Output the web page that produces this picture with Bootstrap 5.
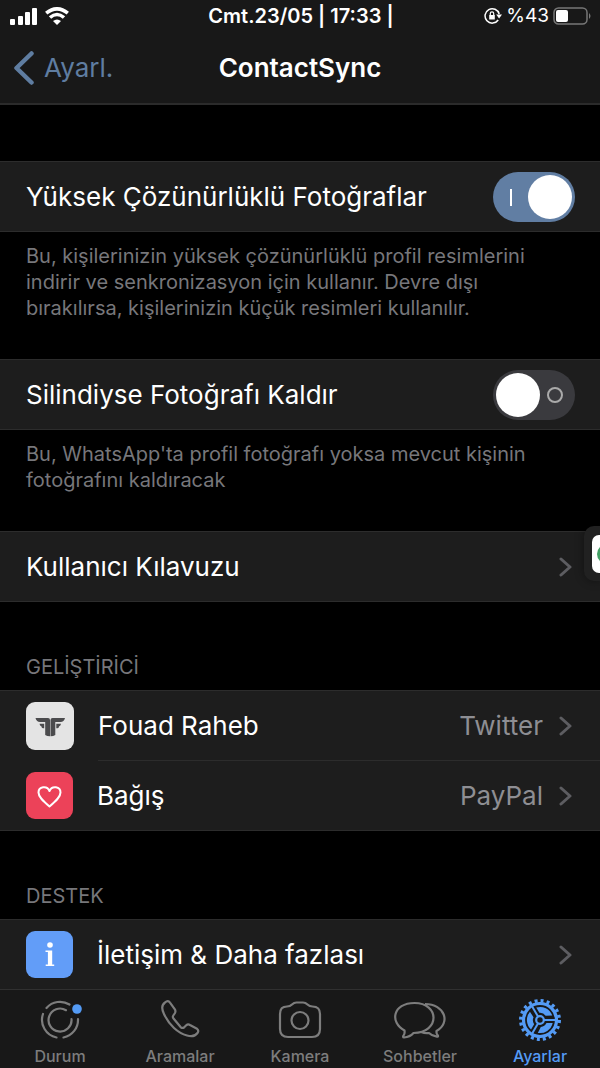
<!DOCTYPE html>
<html lang="tr" data-bs-theme="dark">
<head>
<meta charset="utf-8">
<meta name="viewport" content="width=device-width, initial-scale=1">
<title>ContactSync</title>
<link rel="stylesheet" href="https://cdn.jsdelivr.net/npm/bootstrap@5.3.0/dist/css/bootstrap.min.css">
<style>
  body { background: #000; color: #fff; font-family: Inter, "Liberation Sans", sans-serif; line-height: 1.2; }
  a { text-decoration: none; }
  .top-area { background: #181818; border-bottom: 2px solid #2b2b2b; }
  .status { height: 32px; padding: 0 8px 0 10px; font-size: 20px; }
  .status-side { flex: 1 1 0; }
  .battery-text { font-size: 19px; }
  .title-bar { height: 71px; padding: 0 12px; font-size: 26px; }
  .back-link { color: #5f7da1; flex: 1 1 0; gap: 10px; }
  .page-title { font-size: 26px; font-weight: 600; margin: 0; }
  .settings-scroll { padding-top: 56px; }
  .group { background: #1d1d1d; border: solid #2c2c2c; border-width: 1px 0; margin: 0; }
  .group-open { border-bottom: 0; }
  .line { min-height: 69px; padding: 0 26px; font-size: 26px; color: #fff; }
  .toggle-line { padding-right: 25px; }
  .divider { height: 1px; margin-left: 98px; background: #2c2c2c; }
  .line-detail { color: #8e8e93; }
  .note { color: #77777b; font-size: 20px; line-height: 26px; padding: 11px 26px 38px; margin: 0; }
  .section-title { color: #77777b; font-size: 20px; line-height: 24px; padding: 53px 26px 11px; margin: 0; font-weight: 400; }
  .tile { width: 48px; height: 48px; margin-right: 24px; }
  .tile-small { width: 47px; height: 47px; }
  .toggle.form-check-input { width: 82px; height: 50px; margin: 0; border: 0; border-radius: 25px; background-color: #3a3a3e; background-size: 82px 50px; background-position: center;
    background-image: url("data:image/svg+xml,%3Csvg xmlns='http://www.w3.org/2000/svg' viewBox='0 0 82 50'%3E%3Ccircle cx='62' cy='25' r='7' fill='none' stroke='%23aaa' stroke-width='2'/%3E%3Ccircle cx='25' cy='25' r='22' fill='%23fff'/%3E%3C/svg%3E"); }
  .toggle.form-check-input:checked { background-color: #617ea3;
    background-image: url("data:image/svg+xml,%3Csvg xmlns='http://www.w3.org/2000/svg' viewBox='0 0 82 50'%3E%3Cpath d='M18 17v17' stroke='%23fff' stroke-width='2'/%3E%3Ccircle cx='57' cy='25' r='22' fill='%23fff'/%3E%3C/svg%3E"); }
  .tab-area { background: #181818; border-top: 1px solid #303030; height: 79px; }
  .tab-item { color: #7d7d7d; font-size: 16px; font-weight: 500; line-height: 20px; padding-top: 8px; gap: 4px; }
  .tab-item.active { color: #549bf5; }
  .side-handle { position: fixed; right: 0; top: 526px; width: 16px; height: 55px; background: #212121; border: 0; border-radius: 10px 0 0 10px; padding: 0; box-shadow: 0 0 10px #0006; }
</style>
</head>
<body class="d-flex flex-column min-vh-100">
<header class="top-area sticky-top">
  <div class="status d-flex align-items-center">
    <div class="status-side d-flex align-items-center gap-2">
      <svg width="27" height="18" fill="#fff"><rect y="12" width="5" height="6" rx="1"/><rect x="8" y="9" width="5" height="9" rx="1"/><rect x="15" y="5" width="5" height="13" rx="1"/><rect x="22" y="1" width="5" height="17" rx="1"/></svg>
      <svg width="24" height="18" viewBox="0 0 24 18" fill="none" stroke="#fff" stroke-width="3.600"><path d="M1.200 6.200Q12-2.500 22.800 6.200M5 10.500Q12 4.500 19 10.500"/><path d="M12 18L8 14Q12 10.800 16 14Z" fill="#fff" stroke="none"/></svg>
    </div>
    <div class="fw-semibold">Cmt.23/05 | 17:33 |</div>
    <div class="status-side d-flex align-items-center justify-content-end">
      <svg class="me-1" width="18" height="18" viewBox="0 0 18 18" fill="none" stroke="#fff" stroke-width="1.500"><path d="M14.200 13A7.200 7.200 0 1 1 15.200 7"/><path d="M12.200 7.500h5.800l-2.900 4z" fill="#fff" stroke="none"/><rect x="5.200" y="8" width="5.600" height="4.500" fill="#fff" stroke="none"/><path d="M6.300 8V6.500a1.700 1.700 0 0 1 3.400 0V8" stroke-width="1.200"/></svg>
      <span class="battery-text">%43</span>
      <svg class="ms-1" width="39" height="18" viewBox="0 0 39 18"><rect x="1" y="1" width="33" height="16" rx="4.500" fill="none" stroke="#777" stroke-width="1.500"/><rect x="3" y="3" width="12" height="12" rx="2" fill="#fff"/><path d="M36 6q3 3 0 6z" fill="#777"/></svg>
    </div>
  </div>
  <div class="title-bar d-flex align-items-center">
    <a class="back-link d-flex align-items-center" href="#"><svg width="22" height="34" viewBox="0 0 22 34" fill="none" stroke="currentColor" stroke-width="4.500" stroke-linecap="round" stroke-linejoin="round"><path d="M19.500 2.500L4.500 17l15 14.500"/></svg>Ayarl.</a>
    <h1 class="page-title">ContactSync</h1>
    <span class="status-side"></span>
  </div>
</header>

<main class="settings-scroll flex-grow-1">
  <section class="group"><div class="line toggle-line d-flex align-items-center justify-content-between">
    <label for="hires">Yüksek Çözünürlüklü Fotoğraflar</label><input class="form-check-input toggle" type="checkbox" role="switch" id="hires" checked></div></section>
  <p class="note">Bu, kişilerinizin yüksek çözünürlüklü profil resimlerini indirir ve senkronizasyon için kullanır. Devre dışı bırakılırsa, kişilerinizin küçük resimleri kullanılır.</p>
  <section class="group"><div class="line toggle-line d-flex align-items-center justify-content-between">
    <label for="remove">Silindiyse Fotoğrafı Kaldır</label><input class="form-check-input toggle" type="checkbox" role="switch" id="remove"></div></section>
  <p class="note">Bu, WhatsApp'ta profil fotoğrafı yoksa mevcut kişinin fotoğrafını kaldıracak</p>
  <section class="group"><a href="#" class="line d-flex align-items-center justify-content-between">Kullanıcı Kılavuzu
    <svg width="15" height="22" fill="none" stroke="#5d5d61" stroke-width="3" stroke-linecap="round" stroke-linejoin="round"><path d="M2 3l9 8-9 8"/></svg></a></section>

  <h2 class="section-title">GELİŞTİRİCİ</h2>
  <section class="group">
    <a href="#" class="line d-flex align-items-center">
      <svg class="tile" viewBox="0 0 48 48"><rect width="48" height="48" rx="9" fill="#e4e4e4"/><g fill="#4b4b4d"><path d="M9.500 16H22q2 0 2 2V34.300q-3 0-4.800-1.300V20H14q-3.500 0-4.500-4z"/><path d="M39 16H26.500q-2 0-2 2V34.300q3 0 4.800-1.300V20H34.500q3.500 0 4.500-4z"/><path d="M13.500 21.700H18.200V26.200H17q-1.500 0-1.500-1.700-1.700-.5-2-2.800zM35 21.700H30.300V26.200H31.500q1.500 0 1.500-1.700 1.700-.5 2-2.800z"/></g></svg>
      <span class="flex-grow-1">Fouad Raheb</span><span class="line-detail">Twitter</span>
      <svg class="ms-3" width="15" height="22" fill="none" stroke="#5d5d61" stroke-width="3" stroke-linecap="round" stroke-linejoin="round"><path d="M2 3l9 8-9 8"/></svg>
    </a>
    <div class="divider"></div>
    <a href="#" class="line d-flex align-items-center">
      <svg class="tile tile-small" viewBox="0 0 47 47"><rect width="47" height="47" rx="9" fill="#ec4259"/><path d="M23.500 34.500C17 29 12.500 25 12.500 20.500c0-6 8.500-7.500 11-1.500 2.500-6 11-4.500 11 1.500 0 4.500-4.500 8.500-11 14z" fill="none" stroke="#fff" stroke-width="2" stroke-linejoin="round"/></svg>
      <span class="flex-grow-1">Bağış</span><span class="line-detail">PayPal</span>
      <svg class="ms-3" width="15" height="22" fill="none" stroke="#5d5d61" stroke-width="3" stroke-linecap="round" stroke-linejoin="round"><path d="M2 3l9 8-9 8"/></svg>
    </a>
  </section>

  <h2 class="section-title">DESTEK</h2>
  <section class="group group-open">
    <a href="#" class="line d-flex align-items-center">
      <svg class="tile tile-small" viewBox="0 0 47 47"><rect width="47" height="47" rx="9" fill="#629df8"/><circle cx="24" cy="14" r="2.800" fill="#fff"/><path d="M19.500 19.500h6.700v14h2v1.500h-8.500v-1.500h2.200v-12.500h-2.400z" fill="#fff"/></svg>
      <span class="flex-grow-1">İletişim &amp; Daha fazlası</span>
      <svg width="15" height="22" fill="none" stroke="#5d5d61" stroke-width="3" stroke-linecap="round" stroke-linejoin="round"><path d="M2 3l9 8-9 8"/></svg>
    </a>
  </section>
</main>

<button class="side-handle" type="button" aria-label="Panel"><svg class="d-block ms-auto" width="8" height="38"><rect width="20" height="38" rx="7" fill="#fff"/><circle cx="15" cy="19" r="10" fill="#43a065"/></svg></button>

<nav class="tab-area d-flex sticky-bottom">
  <a href="#" class="tab-item col d-flex flex-column align-items-center"><svg width="44" height="44" viewBox="-22 -22 44 44" fill="none" stroke="currentColor" stroke-width="2.200" stroke-linecap="round"><path d="M6-9.800A11.500 11.500 0 1 0 11.500-1"/><path d="M-13.500-12A18 18 0 0 1 9.500-15.500M18-1A18 18 0 0 1 3.500 17.500M-3.500 17.500A18 18 0 0 1-17-6"/><circle cx="17" cy="-11" r="4.800" fill="#549bf5" stroke="none"/></svg>Durum</a>
  <a href="#" class="tab-item col d-flex flex-column align-items-center"><svg width="44" height="44" viewBox="0 -2 44 44" fill="none" stroke="currentColor" stroke-width="2.200" stroke-linejoin="round"><path d="M7 2.500C3.500 5 3.500 9 6 14c5 11 14 19 23 21.500 4 1.200 8 1 10.500-2.500 1.200-1.500.8-3-.5-4.200L32 25q-2-1.200-3.800.3L26 27.500q-1.500 1-3.200-.2L15.500 18.500q-1.200-1.500-.2-3L17 13q1-2-.3-3.800L12 2.700Q10-.2 7 2.500z"/></svg>Aramalar</a>
  <a href="#" class="tab-item col d-flex flex-column align-items-center"><svg width="44" height="44" viewBox="0 -2 44 44" fill="none" stroke="currentColor" stroke-width="2.200" stroke-linejoin="round"><path d="M9 6.500q3 0 5-2Q16 2.500 18.500 2.500h6.500q2.500 0 4.500 2 2 2 5 2 7.500 0 7.500 7.500V29q0 8-8 8H10q-8 0-8-8V14q0-7.500 7-7.500z"/><circle cx="22" cy="20.500" r="8.500"/></svg>Kamera</a>
  <a href="#" class="tab-item col d-flex flex-column align-items-center"><svg width="54" height="44" viewBox="0 -2 54 44" fill="none" stroke="currentColor" stroke-width="2.200" stroke-linejoin="round"><path d="M11.500 30.500C-3.500 22.500-.5 3 21.500 3c25 0 26 29.500-1 30q-3.500 4-9.500 4.500-1.500-.2-.5-1.800 1.500-2 1-5.200zM32 4c20 0 26 19 11.500 27q-.3 2.800 1.200 4.200 1 1.500-.9 1.500-4.800-.7-7.800-3.700-4 .5-8-1"/></svg>Sohbetler</a>
  <a href="#" class="tab-item active col d-flex flex-column align-items-center" aria-current="page"><svg width="44" height="44" viewBox="-22 -22 44 44" fill="none" stroke="currentColor"><circle r="19.300" stroke-width="3.400" stroke-dasharray="3 3.064"/><circle r="16.500" stroke-width="3.200"/><g stroke-width="2"><path d="M4 0h12"/><path d="M4 0h12" transform="rotate(120)"/><path d="M4 0h12" transform="rotate(240)"/></g><circle r="3.800" stroke-width="2.200"/><g fill="currentColor" stroke="none"><path d="M12.700 3H6.500A7 7 0 0 1 .8 7l-3 5.900A13 13 0 0 0 12.700 3z"/><path transform="rotate(120)" d="M12.700 3H6.500A7 7 0 0 1 .8 7l-3 5.900A13 13 0 0 0 12.700 3z"/><path transform="rotate(240)" d="M12.700 3H6.500A7 7 0 0 1 .8 7l-3 5.900A13 13 0 0 0 12.700 3z"/></g></svg>Ayarlar</a>
</nav>
<script src="https://cdn.jsdelivr.net/npm/bootstrap@5.3.0/dist/js/bootstrap.bundle.min.js"></script>
</body>
</html>
